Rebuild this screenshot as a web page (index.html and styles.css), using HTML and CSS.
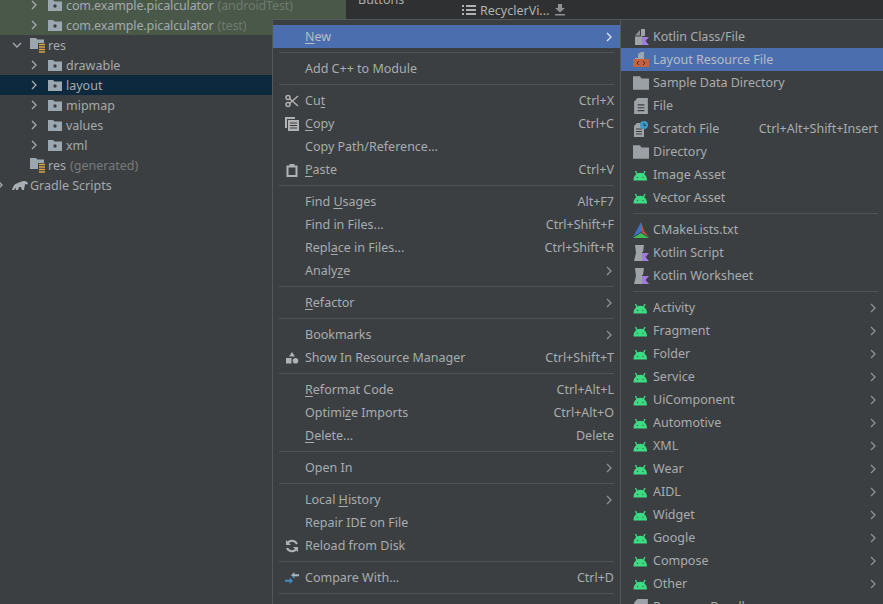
FILE: index.html
```html
<!DOCTYPE html>
<html lang="en">
<head>
<meta charset="utf-8">
<title>New Layout Resource File</title>
<link rel="stylesheet" href="styles.css">
</head>
<body>
<svg class="defs" width="0" height="0" aria-hidden="true">
  <defs>
    <symbol id="chev-r" viewBox="0 0 10 10"><path d="M3 1l4 4-4 4" fill="none" stroke="currentColor" stroke-width="1.3"/></symbol>
    <symbol id="chev-d" viewBox="0 0 10 10"><path d="M1 3l4 4 4-4" fill="none" stroke="currentColor" stroke-width="1.3"/></symbol>
    <symbol id="pkg" viewBox="0 0 14 12"><path d="M0 1h5l1.500 1.500H14V12H0z" fill="#9aa7b0"/><circle cx="7" cy="7" r="1.700" fill="#3c3f41"/></symbol>
    <symbol id="res" viewBox="0 0 16 16"><path d="M0 1h6l1.500 1.500H14V12H0z" fill="#9aa7b0"/><rect x="8" y="6" width="8" height="10" fill="#3c3f41"/><path d="M9 7.500h6M9 10h6M9 12.500h6M9 15h6" stroke="#d9a343" stroke-width="1.400"/></symbol>
    <symbol id="gradle" viewBox="0 0 16 12"><path d="M0 11c1-3 2-6 6-7 2-1 4-2 6-2 2 0 4 1 4 3-1 1-2 0-3 0 0 2-1 4-1 6h-2l-1-3H7l-1 3H4L3.500 8.500 2 11z" fill="#a9b0b5"/></symbol>
    <symbol id="list" viewBox="0 0 14 12"><path d="M0 1h2v2H0zM0 5h2v2H0zM0 9h2v2H0zM4 1h10v2H4zM4 5h10v2H4zM4 9h10v2H4z" fill="#afb1b3"/></symbol>
    <symbol id="down" viewBox="0 0 12 12"><path d="M4 0h4v4h3L6 8.500 1 4h3zM1 10h10v1.500H1z" fill="#8e9193"/></symbol>
    <symbol id="cut" viewBox="0 0 14 14"><circle cx="3" cy="3.500" r="2" fill="none" stroke="#afb1b3" stroke-width="1.500"/><circle cx="3" cy="10.500" r="2" fill="none" stroke="#afb1b3" stroke-width="1.500"/><path d="M4.500 4.500L13 12M4.500 9.500L13 2" stroke="#afb1b3" stroke-width="1.500"/></symbol>
    <symbol id="copy" viewBox="0 0 14 14"><path d="M0 0h10v2H2v9H0z" fill="#afb1b3"/><path d="M3 3h11v11H3z" fill="#afb1b3"/><path d="M5 6h7M5 8.500h7M5 11h7" stroke="#3c3f41"/></symbol>
    <symbol id="paste" viewBox="0 0 14 14"><path d="M1.500 2.500h3V1h5v1.500h3V14h-11zM3.500 4.500v7.500h7V4.500z" fill="#afb1b3"/></symbol>
    <symbol id="shapes" viewBox="0 0 14 14"><path d="M7 1l3 4.500H4z" fill="#afb1b3"/><rect x="1" y="7" width="5.500" height="5.500" fill="#afb1b3"/><circle cx="10.500" cy="9.700" r="2.800" fill="#afb1b3"/></symbol>
    <symbol id="reload" viewBox="0 0 14 14"><path d="M12 5A5.500 5.500 0 0 0 2 5M2 9a5.500 5.500 0 0 0 10 0" fill="none" stroke="#afb1b3" stroke-width="2"/><path d="M1 1v5h5zM13 13V8H8z" fill="#afb1b3"/></symbol>
    <symbol id="compare" viewBox="0 0 15 14"><path d="M15 3H10V.5L6.500 4 10 7.500V5h5z" fill="#a9b6bf"/><path d="M6.500 4L10 7.500V5.500z" fill="#3d8fc4"/><path d="M0 9h5V6.500L8.500 10 5 13.500V11H0z" fill="#3d8fc4"/></symbol>
    <symbol id="kotlin" viewBox="0 0 16 16"><path d="M2 6.500L7 1v5.500z" fill="#8b9094"/><path d="M8 0h4v7H9v9H2V7.500h6z" fill="#9ea3a7"/><path d="M9 8h7l-3.500 4 3.500 4H9z" fill="#a07ce0"/></symbol>
    <symbol id="script" viewBox="0 0 16 16"><path d="M2 0h9l-1 7H9v9H1l2-8z" fill="#9ea3a7"/><path d="M9 8h7l-3.500 4 3.500 4H9z" fill="#a07ce0"/></symbol>
    <symbol id="layoutres" viewBox="0 0 16 16"><path d="M2 6h3V2l3-2h3v7H2z" fill="#9aa7b0"/><rect y="7" width="16" height="8" fill="#c4613f"/><path d="M6 9l-2 2 2 2M10 9l2 2-2 2" fill="none" stroke="#39343a"/></symbol>
    <symbol id="folder" viewBox="0 0 14 12"><path d="M0 0h6l1.500 2H14v10H0z" fill="#9aa0a4"/></symbol>
    <symbol id="file" viewBox="0 0 12 14"><path d="M0 3l3-3h9v14H0z" fill="#9ea3a7"/><path d="M3 6h6M3 8.500h6M3 11h6" stroke="#3c3f41"/></symbol>
    <symbol id="scratch" viewBox="0 0 14 16"><path d="M0 5l3-3h7v14H0z" fill="#9ea3a7"/><path d="M2 8h6M2 10.500h6M2 13h6" stroke="#3c3f41"/><circle cx="10" cy="4" r="4" fill="#3c9ac9"/><path d="M10 2v2.500h2" fill="none" stroke="#2b3a44"/></symbol>
    <symbol id="android" viewBox="0 0 16 11"><path d="M.5 11C.5 6.500 3.500 3.300 7.200 3.300S14 6.500 14 11z" fill="#3ddc84"/><path d="M4 4.500L2.500 1.500M10.500 4.500L12 1.500" stroke="#3ddc84" stroke-width="1.400"/><circle cx="4.500" cy="7.800" r=".6" fill="#3c3f41"/><circle cx="10" cy="7.800" r=".6" fill="#3c3f41"/></symbol>
    <symbol id="cmake" viewBox="0 0 16 16"><path d="M8 0l3 9-3 .5z" fill="#d64b3c"/><path d="M8 0L0 15l8-5z" fill="#3d6fc4"/><path d="M11 9l5 6-8-5z" fill="#c4504a"/><path d="M0 16l8-5 8 5z" fill="#3dbb55"/></symbol>
  </defs>
</svg>

<div class="screen">
  <aside class="tree">
    <div class="node node-test"><svg class="chev lvl2"><use href="#chev-r"/></svg><svg class="pkg"><use href="#pkg"/></svg><span>com.example.picalculator</span><span class="dim">(androidTest)</span></div>
    <div class="node node-test"><svg class="chev lvl2"><use href="#chev-r"/></svg><svg class="pkg"><use href="#pkg"/></svg><span>com.example.picalculator</span><span class="dim">(test)</span></div>
    <div class="node"><svg class="chev lvl1"><use href="#chev-d"/></svg><svg class="resicon"><use href="#res"/></svg><span>res</span></div>
    <div class="node"><svg class="chev lvl2"><use href="#chev-r"/></svg><svg class="pkg"><use href="#pkg"/></svg><span>drawable</span></div>
    <div class="node node-sel"><svg class="chev lvl2"><use href="#chev-r"/></svg><svg class="pkg"><use href="#pkg"/></svg><span>layout</span></div>
    <div class="node"><svg class="chev lvl2"><use href="#chev-r"/></svg><svg class="pkg"><use href="#pkg"/></svg><span>mipmap</span></div>
    <div class="node"><svg class="chev lvl2"><use href="#chev-r"/></svg><svg class="pkg"><use href="#pkg"/></svg><span>values</span></div>
    <div class="node"><svg class="chev lvl2"><use href="#chev-r"/></svg><svg class="pkg"><use href="#pkg"/></svg><span>xml</span></div>
    <div class="node node-gen"><svg class="resicon"><use href="#res"/></svg><span>res</span><span class="dim">(generated)</span></div>
    <div class="node node-gradle"><svg class="chev lvl0"><use href="#chev-r"/></svg><svg class="gradle"><use href="#gradle"/></svg><span>Gradle Scripts</span></div>
  </aside>

  <div class="main-area">
    <div class="top-strip">
      <span class="crumb">Buttons</span>
      <div class="tabline"><svg class="ic-list"><use href="#list"/></svg><span>RecyclerVi...</span><svg class="ic-down"><use href="#down"/></svg></div>
    </div>
  </div>

  <nav class="menu menu-main">
    <div class="row row-active"><i class="ic"></i><span class="label"><u>N</u>ew</span><svg class="arrow arrow-active"><use href="#chev-r"/></svg></div>
    <hr>
    <div class="row"><i class="ic"></i><span class="label">Add C++ to Module</span></div>
    <hr>
    <div class="row"><svg class="ic"><use href="#cut"/></svg><span class="label">Cu<u>t</u></span><span class="key">Ctrl+X</span></div>
    <div class="row"><svg class="ic"><use href="#copy"/></svg><span class="label"><u>C</u>opy</span><span class="key">Ctrl+C</span></div>
    <div class="row"><i class="ic"></i><span class="label">Copy Path/Reference...</span></div>
    <div class="row"><svg class="ic"><use href="#paste"/></svg><span class="label"><u>P</u>aste</span><span class="key">Ctrl+V</span></div>
    <hr>
    <div class="row"><i class="ic"></i><span class="label">Find <u>U</u>sages</span><span class="key">Alt+F7</span></div>
    <div class="row"><i class="ic"></i><span class="label">Find in Files...</span><span class="key">Ctrl+Shift+F</span></div>
    <div class="row"><i class="ic"></i><span class="label">Repl<u>a</u>ce in Files...</span><span class="key">Ctrl+Shift+R</span></div>
    <div class="row"><i class="ic"></i><span class="label">Analy<u>z</u>e</span><svg class="arrow"><use href="#chev-r"/></svg></div>
    <hr>
    <div class="row"><i class="ic"></i><span class="label"><u>R</u>efactor</span><svg class="arrow"><use href="#chev-r"/></svg></div>
    <hr>
    <div class="row"><i class="ic"></i><span class="label">Bookmarks</span><svg class="arrow"><use href="#chev-r"/></svg></div>
    <div class="row"><svg class="ic"><use href="#shapes"/></svg><span class="label">Show In Resource Manager</span><span class="key">Ctrl+Shift+T</span></div>
    <hr>
    <div class="row"><i class="ic"></i><span class="label"><u>R</u>eformat Code</span><span class="key">Ctrl+Alt+L</span></div>
    <div class="row"><i class="ic"></i><span class="label">Optimi<u>z</u>e Imports</span><span class="key">Ctrl+Alt+O</span></div>
    <div class="row"><i class="ic"></i><span class="label"><u>D</u>elete...</span><span class="key">Delete</span></div>
    <hr>
    <div class="row"><i class="ic"></i><span class="label">Open In</span><svg class="arrow"><use href="#chev-r"/></svg></div>
    <hr>
    <div class="row"><i class="ic"></i><span class="label">Local <u>H</u>istory</span><svg class="arrow"><use href="#chev-r"/></svg></div>
    <div class="row"><i class="ic"></i><span class="label">Repair IDE on File</span></div>
    <div class="row"><svg class="ic"><use href="#reload"/></svg><span class="label">Reload from Disk</span></div>
    <hr>
    <div class="row"><svg class="ic"><use href="#compare"/></svg><span class="label">Compare With...</span><span class="key">Ctrl+D</span></div>
    <hr>
  </nav>

  <nav class="menu menu-sub">
    <div class="row"><svg class="ic"><use href="#kotlin"/></svg><span class="label">Kotlin Class/File</span></div>
    <div class="row row-active"><svg class="ic"><use href="#layoutres"/></svg><span class="label">Layout Resource File</span></div>
    <div class="row"><svg class="ic"><use href="#folder"/></svg><span class="label">Sample Data Directory</span></div>
    <div class="row"><svg class="ic"><use href="#file"/></svg><span class="label">File</span></div>
    <div class="row"><svg class="ic"><use href="#scratch"/></svg><span class="label">Scratch File</span><span class="key">Ctrl+Alt+Shift+Insert</span></div>
    <div class="row"><svg class="ic"><use href="#folder"/></svg><span class="label">Directory</span></div>
    <div class="row"><svg class="ic"><use href="#android"/></svg><span class="label">Image Asset</span></div>
    <div class="row"><svg class="ic"><use href="#android"/></svg><span class="label">Vector Asset</span></div>
    <hr>
    <div class="row"><svg class="ic"><use href="#cmake"/></svg><span class="label">CMakeLists.txt</span></div>
    <div class="row"><svg class="ic"><use href="#script"/></svg><span class="label">Kotlin Script</span></div>
    <div class="row"><svg class="ic"><use href="#script"/></svg><span class="label">Kotlin Worksheet</span></div>
    <hr>
    <div class="row"><svg class="ic"><use href="#android"/></svg><span class="label">Activity</span><svg class="arrow"><use href="#chev-r"/></svg></div>
    <div class="row"><svg class="ic"><use href="#android"/></svg><span class="label">Fragment</span><svg class="arrow"><use href="#chev-r"/></svg></div>
    <div class="row"><svg class="ic"><use href="#android"/></svg><span class="label">Folder</span><svg class="arrow"><use href="#chev-r"/></svg></div>
    <div class="row"><svg class="ic"><use href="#android"/></svg><span class="label">Service</span><svg class="arrow"><use href="#chev-r"/></svg></div>
    <div class="row"><svg class="ic"><use href="#android"/></svg><span class="label">UiComponent</span><svg class="arrow"><use href="#chev-r"/></svg></div>
    <div class="row"><svg class="ic"><use href="#android"/></svg><span class="label">Automotive</span><svg class="arrow"><use href="#chev-r"/></svg></div>
    <div class="row"><svg class="ic"><use href="#android"/></svg><span class="label">XML</span><svg class="arrow"><use href="#chev-r"/></svg></div>
    <div class="row"><svg class="ic"><use href="#android"/></svg><span class="label">Wear</span><svg class="arrow"><use href="#chev-r"/></svg></div>
    <div class="row"><svg class="ic"><use href="#android"/></svg><span class="label">AIDL</span><svg class="arrow"><use href="#chev-r"/></svg></div>
    <div class="row"><svg class="ic"><use href="#android"/></svg><span class="label">Widget</span><svg class="arrow"><use href="#chev-r"/></svg></div>
    <div class="row"><svg class="ic"><use href="#android"/></svg><span class="label">Google</span><svg class="arrow"><use href="#chev-r"/></svg></div>
    <div class="row"><svg class="ic"><use href="#android"/></svg><span class="label">Compose</span><svg class="arrow"><use href="#chev-r"/></svg></div>
    <div class="row"><svg class="ic"><use href="#android"/></svg><span class="label">Other</span><svg class="arrow"><use href="#chev-r"/></svg></div>
    <div class="row"><svg class="ic"><use href="#file"/></svg><span class="label">Resource Bundle</span></div>
  </nav>
</div>
</body>
</html>
```
FILE: styles.css
```css
* { box-sizing: border-box; }
html, body { margin: 0; height: 100%; overflow: hidden; background: #3c3f41; }
body { font-family: "Noto Sans", "Open Sans", sans-serif; font-size: 12.5px; color: #a9acae; }
.defs { position: absolute; }
.screen { position: relative; width: 883px; height: 604px; overflow: hidden; display: flex; background: #3c3f41; }

/* project tree */
.tree { width: 346px; margin-top: -5px; flex: none; }
.node { height: 20px; display: flex; align-items: center; padding-left: 12px; white-space: nowrap; color: #a5a9ab; }
.node-test { background: #4a5849; letter-spacing: -0.12px; }
.node-sel { background: #0d293e; }
.node .dim { color: #6f7a6f; margin-left: 4px; }
.node-gen .dim { color: #777a7c; }
.chev { width: 10px; height: 10px; color: #a9acae; flex: none; }
.chev.lvl0 { margin-left: -5px; margin-right: 7px; }
.chev.lvl1 { margin-right: 8px; }
.chev.lvl2 { margin-left: 17px; margin-right: 9px; }
.pkg { width: 14px; height: 12px; margin-right: 4px; flex: none; }
.resicon { width: 16px; height: 16px; margin-right: 2px; flex: none; }
.node-gen { padding-left: 30px; }
.node-gradle { padding-left: 0; }
.gradle { width: 16px; height: 12px; margin-right: 2px; flex: none; }

/* editor strip behind the menus */
.main-area { flex: 1; background: #3c3f41; }
.top-strip { height: 19px; background: #2e3031; position: relative; padding-left: 12px; display: flow-root; color: #a9acae; }
.crumb { display: block; margin-top: -10px; line-height: 20px; }
.tabline { position: absolute; left: 116px; top: 1px; display: flex; align-items: center; height: 18px; gap: 4px; color: #b0b2b4; }
.ic-list { width: 14px; height: 12px; }
.ic-down { width: 12px; height: 12px; margin-left: 1px; }

/* context menus */
.menu { position: absolute; top: 19px; bottom: -40px; background: #3c3f41; border: 1px solid #55585a; padding-top: 5px; }
.menu-main { left: 272px; width: 349px; }
.menu-sub { left: 620px; width: 263px; border-right: 0; }
.row { height: 23px; display: flex; align-items: center; white-space: nowrap; color: #a9acae; }
.row u { text-underline-offset: 2px; }
.row-active { background: #4b6eaf; color: #b7bcc6; }
.ic { width: 14px; height: 14px; flex: none; display: block; }
.menu-main .row { padding: 0 6px 0 12px; }
.menu-main .ic { margin-right: 6px; }
.menu-sub .row { padding: 0 5px 0 12px; }
.menu-sub .ic { width: 16px; height: 16px; margin-right: 4px; }
.label { flex: 1; }
.key { margin-left: 16px; color: #a9acae; }
.arrow { width: 10px; height: 10px; color: #8f9294; flex: none; }
.arrow-active { color: #dfe3ea; }
hr { height: 1px; border: 0; background: #505355; margin: 4px 6px; }
.menu-sub hr { margin: 4px 5px 4px 12px; }
```
